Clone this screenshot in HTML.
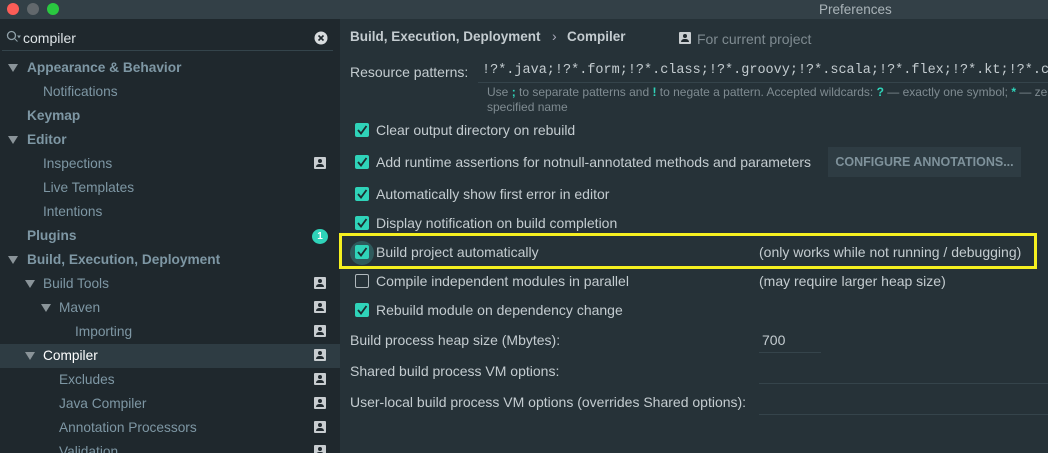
<!DOCTYPE html>
<html><head><meta charset="utf-8"><style>
*{margin:0;padding:0;box-sizing:border-box}
html,body{width:1048px;height:453px;overflow:hidden}
body{background:#263238;font-family:"Liberation Sans",sans-serif;font-size:14px;color:#c4ccd0;position:relative}
.a{position:absolute;white-space:nowrap}
#tb{left:0;top:0;width:1048px;height:19px;background:#334047}
.dot{position:absolute;top:3px;width:12px;height:12px;border-radius:50%}
#side{left:0;top:19px;width:340px;height:434px;background:#1f282d}
.t{position:absolute;font-size:13.7px;color:#7e97a4;white-space:nowrap}
.b{font-weight:bold}
.tri{position:absolute;width:0;height:0;border-left:5px solid transparent;border-right:5px solid transparent;border-top:8px solid #8a9499}
.ic{position:absolute;left:314px;width:12px;height:12px;background:#c8cdd0;border-radius:1px}
.ic:before{content:"";position:absolute;left:4px;top:2px;width:4px;height:4px;border-radius:50%;background:#1f282d}
.ic:after{content:"";position:absolute;left:2px;top:7px;width:8px;height:3px;border-radius:3px 3px 0 0;background:#1f282d}
.cb{position:absolute;left:355px;width:14px;height:14px;background:#2fd3b9;border-radius:2px}
.cb svg{position:absolute;left:1px;top:1px}
.ub{position:absolute;left:355px;width:14px;height:14px;border:1px solid #b0b8bc;border-radius:2px}
.lbl{position:absolute;left:376px;color:#c4ccd0;white-space:nowrap}
</style></head><body>
<div class="a" id="tb"></div>
<div class="dot" style="left:7px;background:#fd5d57"></div>
<div class="dot" style="left:27px;background:#62686c"></div>
<div class="dot" style="left:47px;background:#2ac840"></div>
<div class="a" style="left:819px;top:2px;color:#a9b3b8;font-size:13.5px">Preferences</div>
<div class="a" id="side"></div>
<svg class="a" style="left:6px;top:30px" width="16" height="14"><circle cx="5.5" cy="5.5" r="4" fill="none" stroke="#8fa0a8" stroke-width="1.3"/><path d="M8.5 8.5l3 3M12 6l2 0l-1 1.5z" stroke="#8fa0a8" fill="#8fa0a8"/></svg>
<div class="a" style="left:23px;top:30px;color:#dde3e6;font-size:14px">compiler</div>
<svg class="a" style="left:314px;top:31px" width="14" height="14"><circle cx="7" cy="7" r="6.5" fill="#d8dcde"/><path d="M4.5 4.5l5 5M9.5 4.5l-5 5" stroke="#1f282d" stroke-width="1.6"/></svg>
<div class="a" style="left:2px;top:50px;width:331px;height:1px;background:#34444b"></div>
<div class="tri" style="left:8px;top:64px"></div><div class="t b" style="left:27px;top:60px">Appearance &amp; Behavior</div>
<div class="t" style="left:43px;top:84px">Notifications</div>
<div class="t b" style="left:27px;top:108px">Keymap</div>
<div class="tri" style="left:8px;top:136px"></div><div class="t b" style="left:27px;top:132px">Editor</div>
<div class="t" style="left:43px;top:156px">Inspections</div><div class="ic" style="top:157px"></div>
<div class="t" style="left:43px;top:180px">Live Templates</div>
<div class="t" style="left:43px;top:204px">Intentions</div>
<div class="t b" style="left:27px;top:228px">Plugins</div>
<div class="a" style="left:312px;top:229px;width:16px;height:15px;border-radius:50%;background:#2fd3b9;color:#fff;font-size:10px;font-weight:bold;text-align:center;line-height:15px">1</div>
<div class="tri" style="left:8px;top:256px"></div><div class="t b" style="left:27px;top:252px">Build, Execution, Deployment</div>
<div class="tri" style="left:25px;top:280px"></div><div class="t" style="left:43px;top:276px">Build Tools</div><div class="ic" style="top:277px"></div>
<div class="tri" style="left:41px;top:304px"></div><div class="t" style="left:59px;top:300px">Maven</div><div class="ic" style="top:301px"></div>
<div class="t" style="left:75px;top:324px">Importing</div><div class="ic" style="top:325px"></div>
<div class="a" style="left:0;top:344px;width:340px;height:24px;background:#2e3c43"></div>
<div class="tri" style="left:25px;top:352px"></div><div class="t" style="left:43px;top:348px;color:#fff">Compiler</div><div class="ic" style="top:349px"></div>
<div class="t" style="left:59px;top:372px">Excludes</div><div class="ic" style="top:373px"></div>
<div class="t" style="left:59px;top:396px">Java Compiler</div><div class="ic" style="top:397px"></div>
<div class="t" style="left:59px;top:420px">Annotation Processors</div><div class="ic" style="top:421px"></div>
<div class="t" style="left:59px;top:444px">Validation</div><div class="ic" style="top:445px"></div>

<div class="a b" style="left:350px;top:29px;color:#c4ccd0;font-size:13.5px">Build, Execution, Deployment</div>
<div class="a" style="left:552px;top:28px;color:#aab">›</div>
<div class="a b" style="left:567px;top:29px;color:#c4ccd0;font-size:13.5px">Compiler</div>
<div class="ic" style="left:679px;top:32px;background:#c8cdd0"></div>
<div class="a" style="left:697px;top:31px;color:#7f8b91">For current project</div>
<div class="a" style="left:350px;top:64px">Resource patterns:</div>
<div class="a" style="left:482px;top:63px;font-family:'Liberation Mono',monospace;font-size:13.5px;color:#c4ccd0">!?*.java;!?*.form;!?*.class;!?*.groovy;!?*.scala;!?*.flex;!?*.kt;!?*.cl</div>
<div class="a" style="left:478px;top:82px;width:570px;height:1px;background:#35444b"></div>
<div class="a" style="left:487px;top:85px;font-size:12px;color:#7f8b91">Use <b style="color:#2fd3b9">;</b> to separate patterns and <b style="color:#2fd3b9">!</b> to negate a pattern. Accepted wildcards: <b style="color:#2fd3b9">?</b> — exactly one symbol; <b style="color:#2fd3b9">*</b> — zero or</div>
<div class="a" style="left:487px;top:100px;font-size:12px;color:#7f8b91">specified name</div>

<div class="cb" style="top:123px"><svg width="12" height="12"><path d="M2 6l3 3.5L10.5 2" stroke="#1c2a2e" stroke-width="1.8" fill="none"/></svg></div>
<div class="lbl" style="top:122px">Clear output directory on rebuild</div>
<div class="cb" style="top:155px"><svg width="12" height="12"><path d="M2 6l3 3.5L10.5 2" stroke="#1c2a2e" stroke-width="1.8" fill="none"/></svg></div>
<div class="lbl" style="top:154px">Add runtime assertions for notnull-annotated methods and parameters</div>
<div class="a" style="left:828px;top:147px;width:193px;height:30px;background:#2e3c43;color:#7f929b;font-weight:bold;font-size:12.5px;line-height:30px;text-align:center">CONFIGURE ANNOTATIONS...</div>
<div class="cb" style="top:187px"><svg width="12" height="12"><path d="M2 6l3 3.5L10.5 2" stroke="#1c2a2e" stroke-width="1.8" fill="none"/></svg></div>
<div class="lbl" style="top:186px">Automatically show first error in editor</div>
<div class="cb" style="top:216px"><svg width="12" height="12"><path d="M2 6l3 3.5L10.5 2" stroke="#1c2a2e" stroke-width="1.8" fill="none"/></svg></div>
<div class="lbl" style="top:215px">Display notification on build completion</div>
<div class="a" style="left:339px;top:233px;width:698px;height:36px;border:3px solid #f5f020"></div>
<div class="a" style="left:350px;top:241px;width:24px;height:24px;border-radius:50%;background:#2e5a5c"></div>
<div class="cb" style="top:245px"><svg width="12" height="12"><path d="M2 6l3 3.5L10.5 2" stroke="#1c2a2e" stroke-width="1.8" fill="none"/></svg></div>
<div class="lbl" style="top:244px">Build project automatically</div>
<div class="a" style="left:759px;top:244px">(only works while not running / debugging)</div>
<div class="ub" style="top:274px"></div>
<div class="lbl" style="top:273px">Compile independent modules in parallel</div>
<div class="a" style="left:759px;top:273px">(may require larger heap size)</div>
<div class="cb" style="top:303px"><svg width="12" height="12"><path d="M2 6l3 3.5L10.5 2" stroke="#1c2a2e" stroke-width="1.8" fill="none"/></svg></div>
<div class="lbl" style="top:302px">Rebuild module on dependency change</div>
<div class="a" style="left:350px;top:332px">Build process heap size (Mbytes):</div>
<div class="a" style="left:762px;top:332px">700</div>
<div class="a" style="left:759px;top:352px;width:62px;height:1px;background:#35444b"></div>
<div class="a" style="left:350px;top:363px">Shared build process VM options:</div>
<div class="a" style="left:759px;top:383px;width:289px;height:1px;background:#35444b"></div>
<div class="a" style="left:350px;top:394px">User-local build process VM options (overrides Shared options):</div>
<div class="a" style="left:759px;top:414px;width:289px;height:1px;background:#35444b"></div>
</body></html>
